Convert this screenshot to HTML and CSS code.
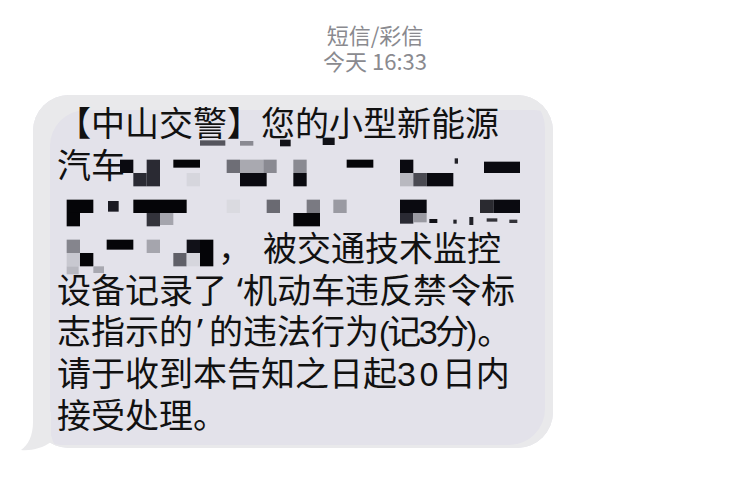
FILE: index.html
```html
<!DOCTYPE html>
<html lang="zh-CN">
<head>
<meta charset="utf-8">
<title>短信/彩信</title>
<link rel="stylesheet" href="styles.css">
</head>
<body>
<div class="screen">
  <div class="meta">
    <div>短信/彩信</div>
    <div>今天 16:33</div>
  </div>
  <div class="bubble">
    <div class="msg">
      <div class="ln">【中山交警】您的小型新能源</div>
      <div class="ln">汽车</div>
      <div class="ln">&nbsp;</div>
      <div class="ln"><span class="gap"></span><span class="comma">，</span>被交通技术监控</div>
      <div class="ln">设备记录了<span class="q q-open">‘</span>机动车违反禁令标</div>
      <div class="ln">志指示的<span class="q q-close">’</span>的违法行为<span class="tight"><span class="p">(</span>记<span class="d3">3</span>分</span><span class="p">)</span>。</div>
      <div class="ln">请于收到本告知之日起<span class="d">30</span>日内</div>
      <div class="ln">接受处理。</div>
    </div>
    <svg class="mosaic" viewBox="0 0 36 11" preserveAspectRatio="none" aria-hidden="true">
      <rect x="12" y="0.55" width="1.9" height="0.4" fill="#55555d"/>
      <rect x="15" y="0.6" width="1" height="0.35" fill="#8a8a92"/>
      <rect x="18" y="0.5" width="0.8" height="0.5" fill="#111117"/>
      <rect x="21.2" y="0.35" width="0.9" height="0.55" fill="#111117"/>
      <rect x="6" y="2" width="1" height="1" fill="#0a0a10"/>
      <rect x="7" y="3" width="1" height="1" fill="#2a2a33"/>
      <rect x="8" y="2" width="1" height="2" fill="#2a2a33"/>
      <rect x="11" y="3" width="1" height="1" fill="#d6d6dd"/>
      <rect x="10" y="2" width="2" height="0.6" fill="#050508"/>
      <rect x="14" y="2" width="1" height="1" fill="#6e6e76"/>
      <rect x="15" y="2" width="1.75" height="1" fill="#a9a9b0"/>
      <rect x="16.75" y="2" width="1" height="1" fill="#8a8a92"/>
      <rect x="15" y="3" width="2" height="1" fill="#0a0a10"/>
      <rect x="19" y="2" width="1" height="1" fill="#8a8a92"/>
      <rect x="19" y="3" width="1" height="1" fill="#0a0a10"/>
      <rect x="23" y="2" width="2" height="0.6" fill="#050508"/>
      <rect x="27" y="2" width="1" height="1" fill="#0a0a10"/>
      <rect x="27" y="3" width="1" height="1" fill="#b9b9c0"/>
      <rect x="28" y="3" width="1" height="1" fill="#4a4a52"/>
      <rect x="29" y="3" width="2" height="1" fill="#0a0a10"/>
      <rect x="31.1" y="1.9" width="0.25" height="0.4" fill="#222228"/>
      <rect x="33.3" y="2.15" width="2.7" height="0.85" fill="#0a0a10"/>
      <rect x="2" y="5" width="2" height="1" fill="#050508"/>
      <rect x="2" y="6" width="1" height="1" fill="#050508"/>
      <rect x="5.1" y="5.1" width="0.8" height="0.8" fill="#1a1a22"/>
      <rect x="7" y="5" width="4" height="1" fill="#050508"/>
      <rect x="8" y="6" width="1" height="1" fill="#33333b"/>
      <rect x="9" y="6" width="1" height="0.9" fill="#a5a5ad"/>
      <rect x="14" y="5" width="1" height="1" fill="#dadae0"/>
      <rect x="17" y="5" width="1" height="1" fill="#6a6a72"/>
      <rect x="20" y="5" width="1" height="1" fill="#7a7a82"/>
      <rect x="19" y="6" width="2" height="1" fill="#050508"/>
      <rect x="22" y="5" width="1" height="1" fill="#9a9aa2"/>
      <rect x="27" y="5" width="2" height="1" fill="#0a0a10"/>
      <rect x="27" y="6" width="1" height="0.8" fill="#2a2a33"/>
      <rect x="28" y="6" width="1" height="0.7" fill="#9a9aa2"/>
      <rect x="29.2" y="6.45" width="0.6" height="0.3" fill="#111117"/>
      <rect x="31" y="6.5" width="0.25" height="0.3" fill="#222228"/>
      <rect x="32.2" y="6.3" width="0.3" height="0.6" fill="#222228"/>
      <rect x="33.5" y="6.4" width="0.8" height="0.25" fill="#333339"/>
      <rect x="35.2" y="6.5" width="0.6" height="0.25" fill="#333339"/>
      <rect x="33" y="5" width="1" height="1" fill="#2a2a30"/>
      <rect x="34" y="5" width="2" height="1" fill="#0a0a10"/>
      <rect x="2" y="8" width="1" height="1" fill="#85858d"/>
      <rect x="2" y="9" width="1" height="1" fill="#c8c8d0"/>
      <rect x="3" y="9" width="1" height="1" fill="#050508"/>
      <rect x="5" y="8" width="2" height="0.75" fill="#050508"/>
      <rect x="8" y="8" width="1" height="1" fill="#a5a5ad"/>
      <rect x="10" y="9" width="1" height="1" fill="#606068"/>
      <rect x="11" y="8" width="1" height="1" fill="#111118"/>
      <rect x="12" y="8" width="1" height="2" fill="#050508"/>
      <rect x="11" y="9" width="1" height="1" fill="#d6d6dd"/>
      <rect x="2" y="10" width="0.9" height="0.6" fill="#b8b8c0"/>
      <rect x="4" y="10" width="0.8" height="0.5" fill="#a8a8b0"/>
    </svg>
    <svg class="tail" viewBox="0 0 40 40" aria-hidden="true">
      <path d="M14 0 L14 10 C14 24 9 33 2 38 C12 39 24 36 32 30 L32 0 Z" fill="#e9e9eb"/>
    </svg>
  </div>
</div>
</body>
</html>
```

FILE: styles.css
```css
html, body {
  margin: 0;
  padding: 0;
  background: #ffffff;
}

.screen {
  width: 750px;
  height: 490px;
  overflow: hidden;
  font-family: "Noto Sans CJK SC", "Noto Sans", sans-serif;
}

.meta {
  padding-top: 21px;
  text-align: center;
  font-size: 22px;
  line-height: 26px;
  color: #8a8a8f;
}

.bubble {
  position: relative;
  margin: 22px 0 0 33px;
  width: 520px;
  height: 353px;
  box-sizing: border-box;
  border-radius: 36px;
  background: #e3e2ea;
  box-shadow: inset 17px 15px 0 0 #e9e9eb, inset -8px -3px 0 0 #e9e9eb;
  padding: 6px 0 0 24px;
}

.msg {
  position: relative;
}

.ln {
  font-size: 34px;
  line-height: 41.7px;
  height: 41.7px;
  color: #111111;
  white-space: nowrap;
}

.gap {
  display: inline-block;
  width: 161px;
}

.comma {
  display: inline-block;
  width: 45px;
}

.q {
  display: inline-block;
  width: 16px;
  font-family: "Noto Sans", "DejaVu Sans", sans-serif;
}

.q-open {
  text-align: right;
}

.q-close {
  text-align: left;
  padding-left: 4px;
  width: 12px;
}

.tight {
  letter-spacing: -2.5px;
}

.p {
  font-family: "Liberation Sans", sans-serif;
  font-size: 32px;
}

.d3 {
  font-family: "Liberation Sans", sans-serif;
}

.d {
  font-family: "Liberation Sans", sans-serif;
  letter-spacing: 3.5px;
}

.mosaic {
  position: absolute;
  left: 7px;
  top: 38.33px;
  width: 480px;
  height: 146.67px;
}

.tail {
  position: absolute;
  left: -14px;
  bottom: -4px;
  width: 40px;
  height: 40px;
}
```
